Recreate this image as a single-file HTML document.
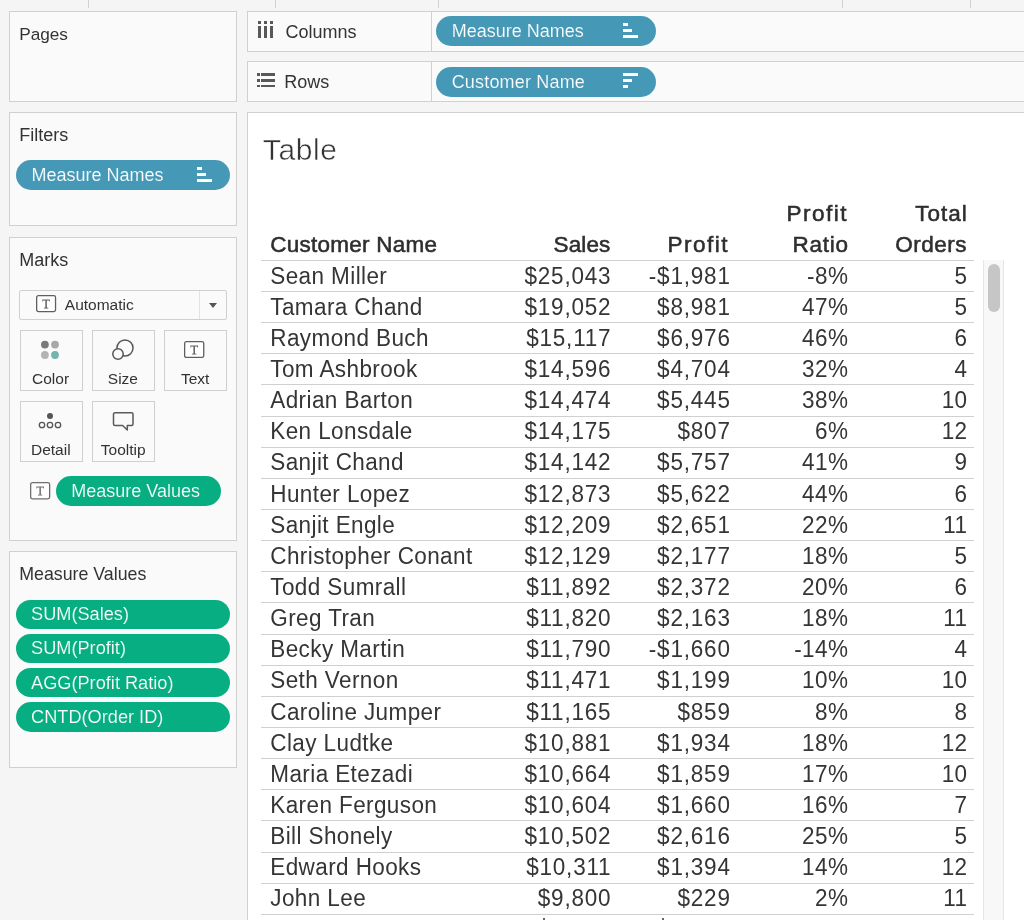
<!DOCTYPE html>
<html><head><meta charset="utf-8"><title>Tableau Table</title><style>
*{margin:0;padding:0;box-sizing:border-box}
html,body{width:1024px;height:920px;overflow:hidden;background:#f5f5f5;font-family:"Liberation Sans",sans-serif;color:#333333}
.a{position:absolute}
.card{position:absolute;background:#fafafa;border:1px solid #d0d0d0}
.t{position:absolute;white-space:nowrap;line-height:30px;height:30px}
.pill{position:absolute;border-radius:15px;color:#fff}
.mb{position:absolute;border:1px solid #d0d0d0;background:#fafafa;width:63px;height:61px}
.tick{position:absolute;top:0;width:1px;height:8px;background:#d2d2d2}
.tbl{position:absolute;left:247px;top:112px;width:777px;height:808px;background:#fff;border-left:1px solid #d0d0d0;border-top:1px solid #d0d0d0}
.tx{position:absolute;white-space:nowrap;font-size:22.5px;letter-spacing:0.4px;line-height:30px;height:30px;color:#353535;transform:scaleY(1.07)}
.r{text-align:right}
.hd{-webkit-text-stroke:0.55px #2e2e2e;color:#2e2e2e;transform:none}
body>div,body>svg{filter:blur(0.35px)}
.ln{position:absolute;left:261px;width:713px;height:1px;background:#d0d0d0}
</style></head>
<body>
<div class="tick" style="left:88px"></div>
<div class="tick" style="left:275px"></div>
<div class="tick" style="left:438px"></div>
<div class="tick" style="left:842px"></div>
<div class="tick" style="left:970px"></div>
<div class="card" style="left:9px;top:11px;width:228px;height:91px"></div>
<div class="card" style="left:9px;top:112px;width:228px;height:114px"></div>
<div class="card" style="left:9px;top:237px;width:228px;height:304px"></div>
<div class="card" style="left:9px;top:551px;width:228px;height:217px"></div>
<div class="t" style="left:19.2px;top:18.84px;font-size:17.2px;">Pages</div>
<div class="t" style="left:19.2px;top:119.76px;font-size:18px;">Filters</div>
<div class="t" style="left:19.2px;top:244.76px;font-size:18px;">Marks</div>
<div class="t" style="left:19.2px;top:558.83px;font-size:17.8px;">Measure Values</div>
<div class="pill" style="left:16px;top:160px;width:214px;height:30px;background:#4699b6"></div>
<div class="t" style="left:31.5px;top:159.76px;font-size:18px;color:#fff;-webkit-text-stroke:0.15px #4699b6">Measure Names</div>
<div class="a" style="left:197px;top:167.00px;width:4.8px;height:2.9px;background:#fff"></div>
<div class="a" style="left:197px;top:172.95px;width:9px;height:2.9px;background:#fff"></div>
<div class="a" style="left:197px;top:178.90px;width:15px;height:2.9px;background:#fff"></div>
<div class="a" style="left:19px;top:289.6px;width:207.8px;height:30.2px;border:1px solid #d0d0d0;background:#fafafa;border-radius:2px"></div>
<div class="a" style="left:199px;top:291px;width:1px;height:28px;background:#e2e2e2"></div>
<div class="a" style="left:209px;top:302.9px;width:0;height:0;border-left:4.7px solid transparent;border-right:4.7px solid transparent;border-top:5px solid #555"></div>
<svg class="a" style="left:36px;top:295.3px;overflow:visible" width="20.2" height="17.3" viewBox="0 0 20.2 17.3"><rect x="0.65" y="0.65" width="18.90" height="16.00" rx="1.8" fill="#fff" stroke="#5f5f5f" stroke-width="1.3"/><path transform="translate(10.10,0)" d="M-3.8 4.5 H3.8 V6.6 H3.3 L2.8 5.6 H0.75 V12.5 L2.2 12.8 V13.5 H-2.2 V12.8 L-0.75 12.5 V5.6 H-2.8 L-3.3 6.6 H-3.8 Z" fill="#5f5f5f"/></svg>
<div class="t" style="left:64.8px;top:289.63px;font-size:15.5px;">Automatic</div>
<div class="mb" style="left:20px;top:330px"></div>
<div class="mb" style="left:92px;top:330px"></div>
<div class="mb" style="left:164px;top:330px"></div>
<div class="mb" style="left:20px;top:401px"></div>
<div class="mb" style="left:92px;top:401px"></div>
<div class="t" style="left:32px;top:364.13px;font-size:15.5px;">Color</div>
<div class="t" style="left:107.8px;top:364.13px;font-size:15.5px;">Size</div>
<div class="t" style="left:181px;top:364.13px;font-size:15.5px;">Text</div>
<div class="t" style="left:31px;top:435.13px;font-size:15.5px;">Detail</div>
<div class="t" style="left:100.8px;top:435.13px;font-size:15.5px;">Tooltip</div>
<svg class="a" style="left:36px;top:336px" width="28" height="28" viewBox="36 336 28 28"><circle cx="44.9" cy="344.6" r="3.9" fill="#7a7a7a"/><circle cx="55" cy="344.6" r="3.9" fill="#a8a8a8"/><circle cx="44.9" cy="355" r="3.9" fill="#b3b3b3"/><circle cx="55" cy="355" r="3.9" fill="#72b5ae"/></svg>
<svg class="a" style="left:110px;top:338px" width="26" height="24" viewBox="0 0 26 24"><circle cx="15" cy="10" r="8" fill="none" stroke="#555" stroke-width="1.5"/><circle cx="8" cy="16" r="5.2" fill="#fafafa" stroke="#555" stroke-width="1.5"/></svg>
<svg class="a" style="left:184.3px;top:341.4px;overflow:visible" width="20.4" height="17.1" viewBox="0 0 20.4 17.1"><rect x="0.65" y="0.65" width="19.10" height="15.80" rx="1.8" fill="#fff" stroke="#5f5f5f" stroke-width="1.3"/><path transform="translate(10.20,0)" d="M-3.8 4.5 H3.8 V6.6 H3.3 L2.8 5.6 H0.75 V12.5 L2.2 12.8 V13.5 H-2.2 V12.8 L-0.75 12.5 V5.6 H-2.8 L-3.3 6.6 H-3.8 Z" fill="#5f5f5f"/></svg>
<svg class="a" style="left:36px;top:410px" width="28" height="22" viewBox="0 0 28 22"><circle cx="14" cy="6" r="3" fill="#555"/><circle cx="6" cy="15" r="2.7" fill="none" stroke="#555" stroke-width="1.3"/><circle cx="14" cy="15" r="2.7" fill="none" stroke="#555" stroke-width="1.3"/><circle cx="22" cy="15" r="2.7" fill="none" stroke="#555" stroke-width="1.3"/></svg>
<svg class="a" style="left:110px;top:410px" width="26" height="22" viewBox="0 0 26 22"><path d="M5 2.8 H21.5 Q23 2.8 23 4.3 V14 Q23 15.5 21.5 15.5 H17.3 V20 L12.6 15.5 H5 Q3.5 15.5 3.5 14 V4.3 Q3.5 2.8 5 2.8 Z" fill="none" stroke="#5a5a5a" stroke-width="1.5" stroke-linejoin="round"/></svg>
<svg class="a" style="left:29.9px;top:482.3px;overflow:visible" width="20.3" height="17.5" viewBox="0 0 20.3 17.5"><rect x="0.65" y="0.65" width="19.00" height="16.20" rx="1.8" fill="#fff" stroke="#6e6e6e" stroke-width="1.3"/><path transform="translate(10.15,0)" d="M-3.8 4.5 H3.8 V6.6 H3.3 L2.8 5.6 H0.75 V12.5 L2.2 12.8 V13.5 H-2.2 V12.8 L-0.75 12.5 V5.6 H-2.8 L-3.3 6.6 H-3.8 Z" fill="#6e6e6e"/></svg>
<div class="pill" style="left:56px;top:476px;width:165px;height:30px;background:#07ae81"></div>
<div class="t" style="left:71.2px;top:475.76px;font-size:18px;color:#fff;-webkit-text-stroke:0.15px #07ae81">Measure Values</div>
<div class="pill" style="left:16px;top:599.5px;width:214px;height:29.5px;background:#07ae81"></div>
<div class="t" style="left:31px;top:599.19px;font-size:18.2px;color:#fff;-webkit-text-stroke:0.15px #07ae81">SUM(Sales)</div>
<div class="pill" style="left:16px;top:633.7px;width:214px;height:29.5px;background:#07ae81"></div>
<div class="t" style="left:31px;top:633.39px;font-size:18.2px;color:#fff;-webkit-text-stroke:0.15px #07ae81">SUM(Profit)</div>
<div class="pill" style="left:16px;top:667.9px;width:214px;height:29.5px;background:#07ae81"></div>
<div class="t" style="left:31px;top:667.59px;font-size:18.2px;color:#fff;-webkit-text-stroke:0.15px #07ae81">AGG(Profit Ratio)</div>
<div class="pill" style="left:16px;top:702.1px;width:214px;height:29.5px;background:#07ae81"></div>
<div class="t" style="left:31px;top:701.79px;font-size:18.2px;color:#fff;-webkit-text-stroke:0.15px #07ae81">CNTD(Order ID)</div>
<div class="a" style="left:247px;top:11px;width:777px;height:41px;background:#fafafa;border:1px solid #d0d0d0;border-right:none"></div>
<div class="a" style="left:431px;top:12px;width:1px;height:39px;background:#d0d0d0"></div>
<div class="a" style="left:247px;top:61px;width:777px;height:41px;background:#fafafa;border:1px solid #d0d0d0;border-right:none"></div>
<div class="a" style="left:431px;top:62px;width:1px;height:39px;background:#d0d0d0"></div>
<div class="t" style="left:285.6px;top:16.56px;font-size:18px;">Columns</div>
<div class="t" style="left:284.2px;top:66.76px;font-size:18px;">Rows</div>
<div class="a" style="left:258.0px;top:21.1px;width:3px;height:2.7px;background:#585858"></div>
<div class="a" style="left:258.0px;top:25.9px;width:3px;height:12.6px;background:#585858"></div>
<div class="a" style="left:264.0px;top:21.1px;width:3px;height:2.7px;background:#585858"></div>
<div class="a" style="left:264.0px;top:25.9px;width:3px;height:12.6px;background:#585858"></div>
<div class="a" style="left:270.0px;top:21.1px;width:3px;height:2.7px;background:#585858"></div>
<div class="a" style="left:270.0px;top:25.9px;width:3px;height:12.6px;background:#585858"></div>
<div class="a" style="left:257px;top:73.10px;width:2.7px;height:2.7px;background:#585858"></div>
<div class="a" style="left:261.3px;top:73.10px;width:13.5px;height:2.7px;background:#585858"></div>
<div class="a" style="left:257px;top:78.95px;width:2.7px;height:2.7px;background:#585858"></div>
<div class="a" style="left:261.3px;top:78.95px;width:13.5px;height:2.7px;background:#585858"></div>
<div class="a" style="left:257px;top:84.80px;width:2.7px;height:2.7px;background:#585858"></div>
<div class="a" style="left:261.3px;top:84.80px;width:13.5px;height:2.7px;background:#585858"></div>
<div class="pill" style="left:436px;top:16px;width:220px;height:30px;background:#4699b6"></div>
<div class="t" style="left:451.7px;top:15.76px;font-size:18px;color:#fff;-webkit-text-stroke:0.15px #4699b6">Measure Names</div>
<div class="a" style="left:623.2px;top:23.10px;width:4.8px;height:2.9px;background:#fff"></div>
<div class="a" style="left:623.2px;top:29.05px;width:9px;height:2.9px;background:#fff"></div>
<div class="a" style="left:623.2px;top:35.00px;width:15px;height:2.9px;background:#fff"></div>
<div class="pill" style="left:436px;top:67px;width:220px;height:29.5px;background:#4699b6"></div>
<div class="t" style="left:451.7px;top:66.76px;font-size:18px;color:#fff;-webkit-text-stroke:0.15px #4699b6;letter-spacing:0.18px">Customer Name</div>
<div class="a" style="left:623px;top:73.30px;width:15px;height:2.9px;background:#fff"></div>
<div class="a" style="left:623px;top:79.25px;width:9px;height:2.9px;background:#fff"></div>
<div class="a" style="left:623px;top:85.20px;width:4.8px;height:2.9px;background:#fff"></div>
<div class="tbl"></div>
<div class="t" style="left:262.8px;top:134.60px;font-size:30px;color:#333;-webkit-text-stroke:0.5px #fff;letter-spacing:0.6px">Table</div>
<div class="tx hd" style="left:270.3px;top:230.30px;letter-spacing:0.25px">Customer Name</div>
<div class="tx r hd" style="right:413.6px;top:230.30px;letter-spacing:0.1px">Sales</div>
<div class="tx r hd" style="right:294.9px;top:230.30px;letter-spacing:1.5px">Profit</div>
<div class="tx r hd" style="right:175.9px;top:198.90px;letter-spacing:1.5px">Profit</div>
<div class="tx r hd" style="right:175.1px;top:230.30px;letter-spacing:0.8px">Ratio</div>
<div class="tx r hd" style="right:56.3px;top:198.90px;letter-spacing:1px">Total</div>
<div class="tx r hd" style="right:57.1px;top:230.30px;letter-spacing:0.5px">Orders</div>
<div class="ln" style="top:260px"></div>
<div class="ln" style="top:291px"></div>
<div class="ln" style="top:322px"></div>
<div class="ln" style="top:353px"></div>
<div class="ln" style="top:384px"></div>
<div class="ln" style="top:416px"></div>
<div class="ln" style="top:447px"></div>
<div class="ln" style="top:478px"></div>
<div class="ln" style="top:509px"></div>
<div class="ln" style="top:540px"></div>
<div class="ln" style="top:571px"></div>
<div class="ln" style="top:602px"></div>
<div class="ln" style="top:634px"></div>
<div class="ln" style="top:665px"></div>
<div class="ln" style="top:696px"></div>
<div class="ln" style="top:727px"></div>
<div class="ln" style="top:758px"></div>
<div class="ln" style="top:789px"></div>
<div class="ln" style="top:820px"></div>
<div class="ln" style="top:852px"></div>
<div class="ln" style="top:883px"></div>
<div class="ln" style="top:914px"></div>
<div class="tx " style="left:270.3px;top:261.60px;">Sean Miller</div>
<div class="tx r " style="right:412.6px;top:261.60px;letter-spacing:0.8px">$25,043</div>
<div class="tx r " style="right:293.3px;top:261.60px;letter-spacing:0.8px">-$1,981</div>
<div class="tx r " style="right:175.7px;top:261.60px;">-8%</div>
<div class="tx r " style="right:56.5px;top:261.60px;">5</div>
<div class="tx " style="left:270.3px;top:292.74px;">Tamara Chand</div>
<div class="tx r " style="right:412.6px;top:292.74px;letter-spacing:0.8px">$19,052</div>
<div class="tx r " style="right:293.3px;top:292.74px;letter-spacing:0.8px">$8,981</div>
<div class="tx r " style="right:175.7px;top:292.74px;">47%</div>
<div class="tx r " style="right:56.5px;top:292.74px;">5</div>
<div class="tx " style="left:270.3px;top:323.88px;">Raymond Buch</div>
<div class="tx r " style="right:412.6px;top:323.88px;letter-spacing:0.8px">$15,117</div>
<div class="tx r " style="right:293.3px;top:323.88px;letter-spacing:0.8px">$6,976</div>
<div class="tx r " style="right:175.7px;top:323.88px;">46%</div>
<div class="tx r " style="right:56.5px;top:323.88px;">6</div>
<div class="tx " style="left:270.3px;top:355.02px;">Tom Ashbrook</div>
<div class="tx r " style="right:412.6px;top:355.02px;letter-spacing:0.8px">$14,596</div>
<div class="tx r " style="right:293.3px;top:355.02px;letter-spacing:0.8px">$4,704</div>
<div class="tx r " style="right:175.7px;top:355.02px;">32%</div>
<div class="tx r " style="right:56.5px;top:355.02px;">4</div>
<div class="tx " style="left:270.3px;top:386.16px;">Adrian Barton</div>
<div class="tx r " style="right:412.6px;top:386.16px;letter-spacing:0.8px">$14,474</div>
<div class="tx r " style="right:293.3px;top:386.16px;letter-spacing:0.8px">$5,445</div>
<div class="tx r " style="right:175.7px;top:386.16px;">38%</div>
<div class="tx r " style="right:56.5px;top:386.16px;">10</div>
<div class="tx " style="left:270.3px;top:417.30px;">Ken Lonsdale</div>
<div class="tx r " style="right:412.6px;top:417.30px;letter-spacing:0.8px">$14,175</div>
<div class="tx r " style="right:293.3px;top:417.30px;letter-spacing:0.8px">$807</div>
<div class="tx r " style="right:175.7px;top:417.30px;">6%</div>
<div class="tx r " style="right:56.5px;top:417.30px;">12</div>
<div class="tx " style="left:270.3px;top:448.44px;">Sanjit Chand</div>
<div class="tx r " style="right:412.6px;top:448.44px;letter-spacing:0.8px">$14,142</div>
<div class="tx r " style="right:293.3px;top:448.44px;letter-spacing:0.8px">$5,757</div>
<div class="tx r " style="right:175.7px;top:448.44px;">41%</div>
<div class="tx r " style="right:56.5px;top:448.44px;">9</div>
<div class="tx " style="left:270.3px;top:479.58px;">Hunter Lopez</div>
<div class="tx r " style="right:412.6px;top:479.58px;letter-spacing:0.8px">$12,873</div>
<div class="tx r " style="right:293.3px;top:479.58px;letter-spacing:0.8px">$5,622</div>
<div class="tx r " style="right:175.7px;top:479.58px;">44%</div>
<div class="tx r " style="right:56.5px;top:479.58px;">6</div>
<div class="tx " style="left:270.3px;top:510.72px;">Sanjit Engle</div>
<div class="tx r " style="right:412.6px;top:510.72px;letter-spacing:0.8px">$12,209</div>
<div class="tx r " style="right:293.3px;top:510.72px;letter-spacing:0.8px">$2,651</div>
<div class="tx r " style="right:175.7px;top:510.72px;">22%</div>
<div class="tx r " style="right:56.5px;top:510.72px;">11</div>
<div class="tx " style="left:270.3px;top:541.86px;">Christopher Conant</div>
<div class="tx r " style="right:412.6px;top:541.86px;letter-spacing:0.8px">$12,129</div>
<div class="tx r " style="right:293.3px;top:541.86px;letter-spacing:0.8px">$2,177</div>
<div class="tx r " style="right:175.7px;top:541.86px;">18%</div>
<div class="tx r " style="right:56.5px;top:541.86px;">5</div>
<div class="tx " style="left:270.3px;top:573.00px;">Todd Sumrall</div>
<div class="tx r " style="right:412.6px;top:573.00px;letter-spacing:0.8px">$11,892</div>
<div class="tx r " style="right:293.3px;top:573.00px;letter-spacing:0.8px">$2,372</div>
<div class="tx r " style="right:175.7px;top:573.00px;">20%</div>
<div class="tx r " style="right:56.5px;top:573.00px;">6</div>
<div class="tx " style="left:270.3px;top:604.14px;">Greg Tran</div>
<div class="tx r " style="right:412.6px;top:604.14px;letter-spacing:0.8px">$11,820</div>
<div class="tx r " style="right:293.3px;top:604.14px;letter-spacing:0.8px">$2,163</div>
<div class="tx r " style="right:175.7px;top:604.14px;">18%</div>
<div class="tx r " style="right:56.5px;top:604.14px;">11</div>
<div class="tx " style="left:270.3px;top:635.28px;">Becky Martin</div>
<div class="tx r " style="right:412.6px;top:635.28px;letter-spacing:0.8px">$11,790</div>
<div class="tx r " style="right:293.3px;top:635.28px;letter-spacing:0.8px">-$1,660</div>
<div class="tx r " style="right:175.7px;top:635.28px;">-14%</div>
<div class="tx r " style="right:56.5px;top:635.28px;">4</div>
<div class="tx " style="left:270.3px;top:666.42px;">Seth Vernon</div>
<div class="tx r " style="right:412.6px;top:666.42px;letter-spacing:0.8px">$11,471</div>
<div class="tx r " style="right:293.3px;top:666.42px;letter-spacing:0.8px">$1,199</div>
<div class="tx r " style="right:175.7px;top:666.42px;">10%</div>
<div class="tx r " style="right:56.5px;top:666.42px;">10</div>
<div class="tx " style="left:270.3px;top:697.56px;">Caroline Jumper</div>
<div class="tx r " style="right:412.6px;top:697.56px;letter-spacing:0.8px">$11,165</div>
<div class="tx r " style="right:293.3px;top:697.56px;letter-spacing:0.8px">$859</div>
<div class="tx r " style="right:175.7px;top:697.56px;">8%</div>
<div class="tx r " style="right:56.5px;top:697.56px;">8</div>
<div class="tx " style="left:270.3px;top:728.70px;">Clay Ludtke</div>
<div class="tx r " style="right:412.6px;top:728.70px;letter-spacing:0.8px">$10,881</div>
<div class="tx r " style="right:293.3px;top:728.70px;letter-spacing:0.8px">$1,934</div>
<div class="tx r " style="right:175.7px;top:728.70px;">18%</div>
<div class="tx r " style="right:56.5px;top:728.70px;">12</div>
<div class="tx " style="left:270.3px;top:759.84px;">Maria Etezadi</div>
<div class="tx r " style="right:412.6px;top:759.84px;letter-spacing:0.8px">$10,664</div>
<div class="tx r " style="right:293.3px;top:759.84px;letter-spacing:0.8px">$1,859</div>
<div class="tx r " style="right:175.7px;top:759.84px;">17%</div>
<div class="tx r " style="right:56.5px;top:759.84px;">10</div>
<div class="tx " style="left:270.3px;top:790.98px;">Karen Ferguson</div>
<div class="tx r " style="right:412.6px;top:790.98px;letter-spacing:0.8px">$10,604</div>
<div class="tx r " style="right:293.3px;top:790.98px;letter-spacing:0.8px">$1,660</div>
<div class="tx r " style="right:175.7px;top:790.98px;">16%</div>
<div class="tx r " style="right:56.5px;top:790.98px;">7</div>
<div class="tx " style="left:270.3px;top:822.12px;">Bill Shonely</div>
<div class="tx r " style="right:412.6px;top:822.12px;letter-spacing:0.8px">$10,502</div>
<div class="tx r " style="right:293.3px;top:822.12px;letter-spacing:0.8px">$2,616</div>
<div class="tx r " style="right:175.7px;top:822.12px;">25%</div>
<div class="tx r " style="right:56.5px;top:822.12px;">5</div>
<div class="tx " style="left:270.3px;top:853.26px;">Edward Hooks</div>
<div class="tx r " style="right:412.6px;top:853.26px;letter-spacing:0.8px">$10,311</div>
<div class="tx r " style="right:293.3px;top:853.26px;letter-spacing:0.8px">$1,394</div>
<div class="tx r " style="right:175.7px;top:853.26px;">14%</div>
<div class="tx r " style="right:56.5px;top:853.26px;">12</div>
<div class="tx " style="left:270.3px;top:884.40px;">John Lee</div>
<div class="tx r " style="right:412.6px;top:884.40px;letter-spacing:0.8px">$9,800</div>
<div class="tx r " style="right:293.3px;top:884.40px;letter-spacing:0.8px">$229</div>
<div class="tx r " style="right:175.7px;top:884.40px;">2%</div>
<div class="tx r " style="right:56.5px;top:884.40px;">11</div>
<div class="a" style="left:543px;top:918px;width:1.5px;height:2px;background:#666"></div><div class="a" style="left:662px;top:918px;width:1.5px;height:2px;background:#666"></div>
<div class="a" style="left:983px;top:260px;width:21px;height:660px;background:#f8f8f8;border-left:1px solid #e6e6e6;border-right:1px solid #e6e6e6"></div>
<div class="a" style="left:988px;top:264px;width:12px;height:48px;border-radius:6px;background:#c6c6c6"></div>
</body></html>
